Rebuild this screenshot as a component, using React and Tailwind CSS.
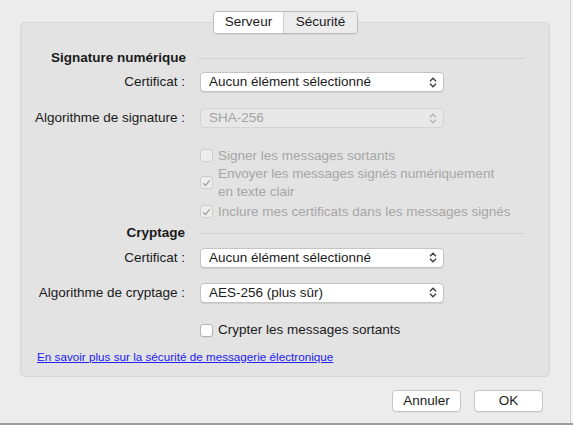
const font = { fontFamily: '"Liberation Sans", Arial, sans-serif' };

function Stepper({ disabled }) {
  return (
    <span className={`flex flex-col items-center ${disabled ? "text-[#b4b4b4]" : "text-[#3a3a3a]"}`}>
      <svg width="8" height="5" viewBox="0 0 8 5" fill="none">
        <path d="M1 4.2 L4 1.2 L7 4.2" stroke="currentColor" strokeWidth="1.3" />
      </svg>
      <svg width="8" height="5" viewBox="0 0 8 5" fill="none" className="mt-[1px]">
        <path d="M1 0.8 L4 3.8 L7 0.8" stroke="currentColor" strokeWidth="1.3" />
      </svg>
    </span>
  );
}

function Popup({ value, disabled }) {
  return (
    <div
      className={`flex h-[20px] w-[244px] items-center justify-between rounded-[4px] border pl-[8px] pr-[6px] text-[13.5px] ${
        disabled
          ? "border-[#d4d4d4] bg-[#e8e8e8] text-[#a3a3a3]"
          : "border-[#c4c4c4] bg-white text-[#1a1a1a] shadow-[0_1px_0_rgba(0,0,0,0.08)]"
      }`}
    >
      <span>{value}</span>
      <Stepper disabled={disabled} />
    </div>
  );
}

function Check({ checked, disabled }) {
  return (
    <span
      className={`flex h-[13px] w-[13px] shrink-0 items-center justify-center rounded-[3px] border ${
        disabled ? "border-[#cdcdcd] bg-[#eeeeee]" : "border-[#b3b3b3] bg-white shadow-[0_1px_0_rgba(0,0,0,0.06)]"
      }`}
    >
      {checked && (
        <svg width="9" height="8" viewBox="0 0 9 8" fill="none">
          <path d="M1.2 4.2 L3.5 6.6 L7.8 1.2" stroke={disabled ? "#a0a0a0" : "#333"} strokeWidth="1.3" />
        </svg>
      )}
    </span>
  );
}

function Row({ label, children, className = "" }) {
  return (
    <div className={`flex items-center ${className}`}>
      <span className="w-[165px] pr-[1px] text-right text-[13.5px] text-[#1a1a1a]">{label}</span>
      <div className="ml-[14px]">{children}</div>
    </div>
  );
}

function Option({ children, checked, disabled, className = "" }) {
  return (
    <div className={`ml-[179px] flex items-center gap-[5px] text-[13.5px] leading-[18px] ${disabled ? "text-[#a6a6a6]" : "text-[#1a1a1a]"} ${className}`}>
      <Check checked={checked} disabled={disabled} />
      <span>{children}</span>
    </div>
  );
}

export default function App() {
  return (
    <div className="h-[425px] w-[573px] bg-[#f6f6f6]" style={font}>
      <div className="h-[423px] w-[571px] border-r border-[#cfcfcf] bg-[#ececec] pt-[11px]">
        {/* tab selector sitting on the group box edge */}
        <div className="relative z-10 ml-[213px] flex h-[23px] w-[145px] overflow-hidden rounded-[4px] border border-[#bdbdbd] text-[13.5px] text-[#1a1a1a] shadow-[0_1px_0_rgba(0,0,0,0.06)]">
          <span className="flex w-[69px] items-center justify-center bg-white">Serveur</span>
          <span className="flex flex-1 items-center justify-center border-l border-[#d0d0d0] bg-[#ececec]">Sécurité</span>
        </div>

        <div className="-mt-[12px] ml-[20px] h-[355px] w-[530px] rounded-[5px] border border-[#d7d7d7] bg-[#e3e3e3] pt-[27px]">
          {/* Signature numérique */}
          <div className="flex h-[16px] items-center">
            <span className="ml-[30px] text-[13.5px] font-bold text-[#1a1a1a]">Signature numérique</span>
            <span className="ml-[12px] h-px w-[327px] bg-[#cfcfcf]" />
          </div>
          <Row label="Certificat :" className="mt-[6px]">
            <Popup value="Aucun élément sélectionné" />
          </Row>
          <Row label="Algorithme de signature :" className="mt-[16px]">
            <Popup value="SHA-256" disabled />
          </Row>
          <Option disabled className="mt-[18px]">Signer les messages sortants</Option>
          <Option disabled checked>
            Envoyer les messages signés numériquement
            <br />
            en texte clair
          </Option>
          <Option disabled checked className="mt-[2px]">Inclure mes certificats dans les messages signés</Option>

          {/* Cryptage */}
          <div className="mt-[5px] flex h-[16px] items-center">
            <span className="w-[165px] pr-[1px] text-right text-[13.5px] font-bold text-[#1a1a1a]">Cryptage</span>
            <span className="ml-[15px] h-px w-[323px] bg-[#cfcfcf]" />
          </div>
          <Row label="Certificat :" className="mt-[6px]">
            <Popup value="Aucun élément sélectionné" />
          </Row>
          <Row label="Algorithme de cryptage :" className="mt-[15px]">
            <Popup value="AES-256 (plus sûr)" />
          </Row>
          <Option className="mt-[18px]">Crypter les messages sortants</Option>

          <a href="#" className="ml-[16px] mt-[11px] block text-[11.7px] leading-[14px] text-[#2222ee] underline">
            En savoir plus sur la sécurité de messagerie électronique
          </a>
        </div>

        <div className="mt-[13px] flex justify-end gap-[13px] pr-[27px]">
          <button className="h-[22px] w-[69px] rounded-[4px] border border-[#c6c6c6] bg-white text-[13.5px] text-[#1a1a1a] shadow-[0_1px_0_rgba(0,0,0,0.06)]">
            Annuler
          </button>
          <button className="h-[22px] w-[69px] rounded-[4px] border border-[#c6c6c6] bg-white text-[13.5px] text-[#1a1a1a] shadow-[0_1px_0_rgba(0,0,0,0.06)]">
            OK
          </button>
        </div>
      </div>
      <div className="h-[2px] w-full bg-[#9c9c9c]" />
    </div>
  );
}
